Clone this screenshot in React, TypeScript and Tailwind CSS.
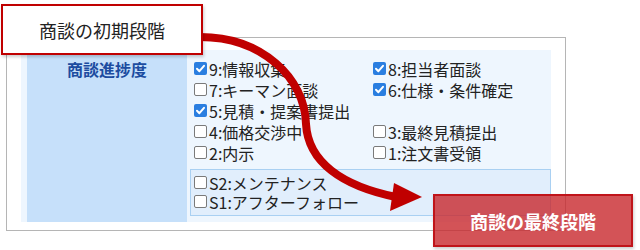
import React from 'react';

type Item = { label: string; checked: boolean };

const leftCol: (Item | null)[] = [
  { label: '9:情報収集', checked: true },
  { label: '7:キーマン面談', checked: false },
  { label: '5:見積・提案書提出', checked: true },
  { label: '4:価格交渉中', checked: false },
  { label: '2:内示', checked: false },
];

const rightCol: (Item | null)[] = [
  { label: '8:担当者面談', checked: true },
  { label: '6:仕様・条件確定', checked: true },
  null,
  { label: '3:最終見積提出', checked: false },
  { label: '1:注文書受領', checked: false },
];

const support: Item[] = [
  { label: 'S2:メンテナンス', checked: false },
  { label: 'S1:アフターフォロー', checked: false },
];

function Box({ checked }: { checked: boolean }) {
  if (checked) {
    return (
      <span className="w-[13px] h-[13px] rounded-[2px] bg-[#2a7ee0] flex items-center justify-center shrink-0">
        <svg width="11" height="11" viewBox="0 0 11 11">
          <path d="M2 5.8 L4.4 8.2 L9 2.8" fill="none" stroke="#fff" strokeWidth="2" strokeLinecap="round" strokeLinejoin="round" />
        </svg>
      </span>
    );
  }
  return <span className="w-[13px] h-[13px] rounded-[2px] bg-white border border-[#7a7a7a] shrink-0" />;
}

function Check({ item, h }: { item: Item | null; h: string }) {
  if (!item) return <div className={h} />;
  return (
    <div className={`flex items-center gap-[2px] ${h}`}>
      <Box checked={item.checked} />
      <span className="text-[16px] leading-none text-[#222] whitespace-nowrap">{item.label}</span>
    </div>
  );
}

export default function App() {
  return (
    <div
      className="relative w-[640px] h-[250px] bg-white overflow-hidden"
      style={{ fontFamily: '"Noto Sans CJK JP", "Noto Sans", sans-serif' }}
    >
      <div className="pt-[37px] pl-[6px]">
        <div className="w-[560px] h-[194px] border border-[#b5b5b5] pt-[12px] pl-[14px] pr-[14px]">
          <div className="flex bg-[#eef6fe] pl-[6px] h-[172px]">
            <div className="w-[160px] bg-[#c6e0fa] flex justify-center pt-[9px]">
              <span className="text-[16px] leading-[20px] font-bold text-[#1c4ca0]">商談進捗度</span>
            </div>
            <div className="flex-1 pl-[3px] pt-[8px]">
              <div className="pl-[4px] grid grid-cols-[179px_1fr]">
                <div className="flex flex-col">
                  {leftCol.map((it, i) => (
                    <Check key={i} item={it} h="h-[21px]" />
                  ))}
                </div>
                <div className="flex flex-col">
                  {rightCol.map((it, i) => (
                    <Check key={i} item={it} h="h-[21px]" />
                  ))}
                </div>
              </div>
              <div className="mt-[6px] border border-[#a9d0f2] bg-[#e1eefc] pt-[3px] pb-[4px] pl-[3px]">
                {support.map((it, i) => (
                  <Check key={i} item={it} h="h-[19px]" />
                ))}
              </div>
            </div>
          </div>
        </div>
      </div>

      <svg className="absolute left-0 top-0 pointer-events-none" width="640" height="250" viewBox="0 0 640 250">
        <path
          d="M200 37 C262 37 305 78 306 124 C308 162 342 186 396 197"
          fill="none"
          stroke="#c00000"
          strokeWidth="8"
        />
        <polygon points="394,183 390,211 422,197" fill="#c00000" />
      </svg>

      <div className="absolute left-[1px] top-[4px] w-[202px] h-[51px] bg-white border-2 border-[#c00000] flex items-center justify-center shadow-[1px_2px_3px_rgba(0,0,0,0.2)]">
        <span className="text-[18px] text-[#222] leading-none">商談の初期段階</span>
      </div>

      <div className="absolute left-[433px] top-[194px] w-[200px] h-[53px] bg-[rgba(200,40,45,0.8)] border-2 border-[#c0141a] flex items-center justify-center shadow-[1px_2px_3px_rgba(0,0,0,0.2)]">
        <span className="text-[18px] font-bold text-white leading-none">商談の最終段階</span>
      </div>
    </div>
  );
}
